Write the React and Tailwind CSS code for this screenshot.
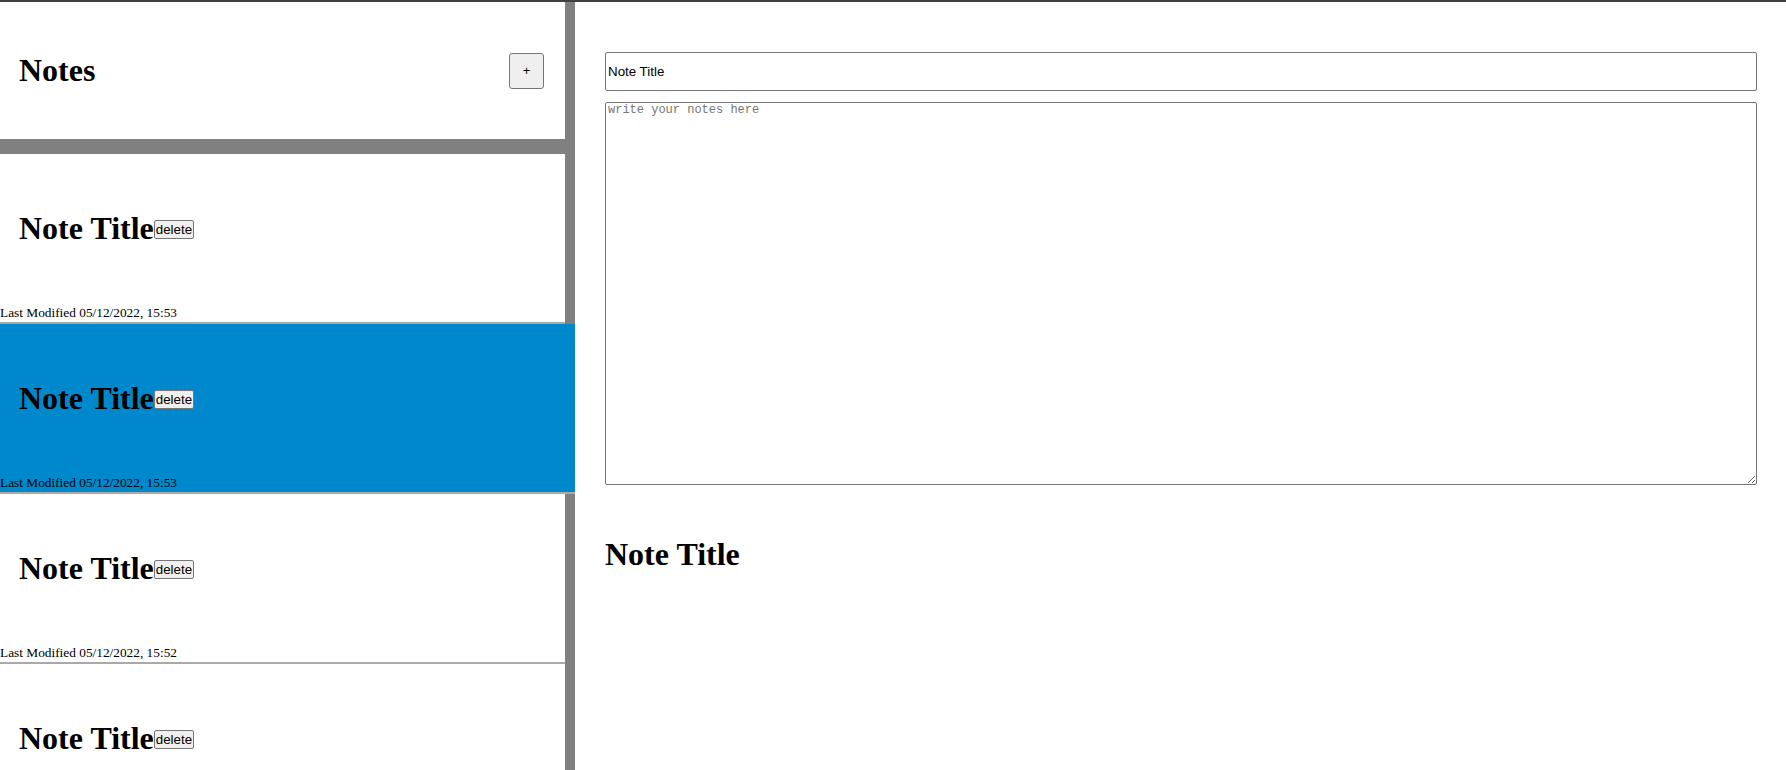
// Notes app: sidebar list of notes + editor panel

const NOTES = [
  { id: 1, title: 'Note Title', modified: '05/12/2022, 15:53' },
  { id: 2, title: 'Note Title', modified: '05/12/2022, 15:53', active: true },
  { id: 3, title: 'Note Title', modified: '05/12/2022, 15:52' },
  { id: 4, title: 'Note Title', modified: '05/12/2022, 15:52' },
];

const serif = "font-['Liberation_Serif',serif]";

function NoteItem({ note }) {
  return (
    <div
      className={`h-[170px] shrink-0 flex flex-col border-b-2 border-[#a9a9a9] ${
        note.active ? 'bg-[#0088cc] w-[575px]' : 'bg-white w-[565px]'
      }`}
    >
      <div className="pt-[56px] pl-[19px] flex items-center">
        <h1 className={`${serif} text-[32px] leading-[37px] font-bold text-black`}>{note.title}</h1>
        <button className="h-[19px] px-[1px] mt-[2px] bg-[#efefef] border border-[#767676] rounded-[2px] text-[13.33px] leading-[15px] font-['Liberation_Sans',sans-serif] text-black">
          delete
        </button>
      </div>
      <div className={`${serif} mt-auto text-[13.33px] leading-[15px] text-black pb-[2px]`}>
        Last Modified {note.modified}
      </div>
    </div>
  );
}

export default function App() {
  return (
    <div className="w-[1786px] h-[770px] overflow-hidden bg-white border-t-2 border-[#404040] flex">
      {/* sidebar */}
      <aside className="w-[575px] shrink-0 bg-[#808080] flex flex-col">
        <div className="h-[137px] shrink-0 w-[565px] bg-white flex items-center justify-between pl-[19px] pr-[21px]">
          <h1 className={`${serif} text-[32px] leading-[37px] font-bold text-black`}>Notes</h1>
          <button className="w-[35px] h-[36px] bg-[#efefef] border border-[#767676] rounded-[3px] text-[13px] font-['Liberation_Sans',sans-serif] text-black">
            +
          </button>
        </div>
        <div className="h-[15px] shrink-0" />
        {NOTES.map((n) => (
          <NoteItem key={n.id} note={n} />
        ))}
      </aside>

      {/* editor */}
      <main className="flex-1 pl-[30px] pr-[29px] pt-[50px] flex flex-col">
        <input
          defaultValue="Note Title"
          className="h-[39px] w-full border border-[#767676] rounded-[2px] px-[2px] text-[13.33px] font-['Liberation_Sans',sans-serif] text-black outline-none"
        />
        <textarea
          placeholder="write your notes here"
          className="mt-[11px] h-[383px] w-full border border-[#767676] rounded-[2px] px-[2px] pt-0 text-[12px] leading-[15px] font-['Liberation_Mono',monospace] placeholder:text-[#757575] outline-none resize"
        />
        <h1 className={`${serif} mt-[51px] text-[32px] leading-[37px] font-bold text-black`}>Note Title</h1>
      </main>
    </div>
  );
}
